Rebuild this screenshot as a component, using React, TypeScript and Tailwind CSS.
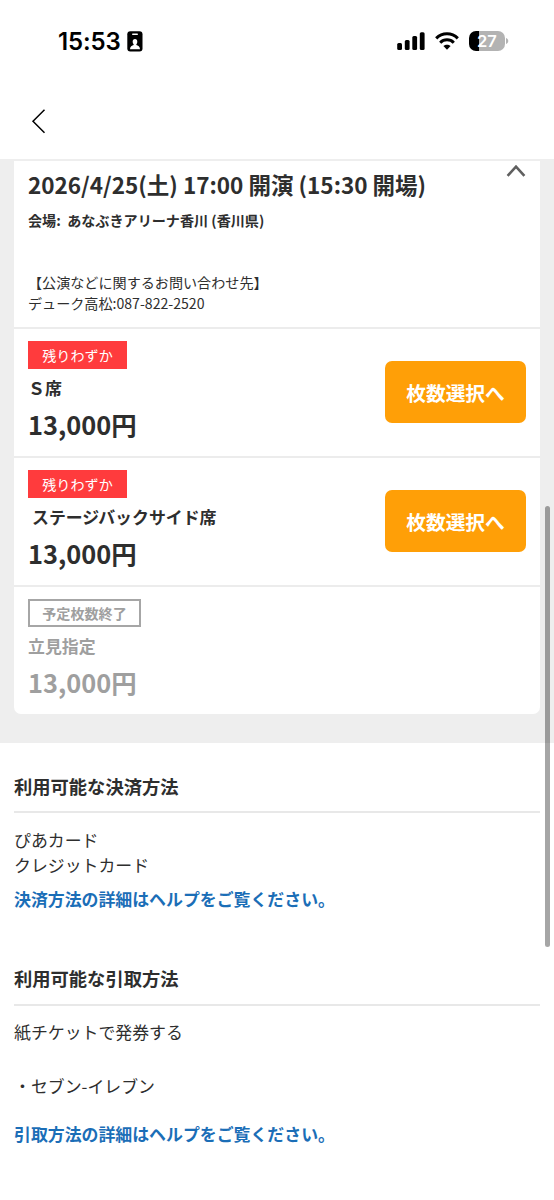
type Seat = { name: string; price: string; indent: string; soldOut?: boolean };

const seats: Seat[] = [
  { name: 'Ｓ席', price: '13,000円', indent: 'pl-0' },
  { name: 'ステージバックサイド席', price: '13,000円', indent: 'pl-[4px]' },
  { name: '立見指定', price: '13,000円', indent: 'pl-0', soldOut: true },
];

function StatusBar() {
  return (
    <div className="flex h-[82px] items-center justify-between pl-[58px] pr-[45px] text-black">
      <div className="flex items-center gap-[6px]">
        <span className="w-[63px] whitespace-nowrap pt-px font-[Inter,sans-serif] text-[24px] font-semibold leading-7 tracking-[-0.1px]">15:53</span>
        <svg width="16" height="21" viewBox="0 0 16 21">
          <rect x="0.3" y="0.3" width="15.2" height="20.2" rx="3" fill="#000" />
          <rect x="5" y="2.5" width="6" height="1.6" rx="0.8" fill="#fff" />
          <ellipse cx="8" cy="10.8" rx="2.3" ry="2.8" fill="#fff" />
          <path d="M3 18.2C3 15.6 5 14.6 6.7 14.1V12.5H9.3V14.1C11 14.6 13 15.6 13 18.2Z" fill="#fff" />
        </svg>
      </div>
      <div className="flex items-center">
        <svg width="28" height="18" viewBox="0 0 28 18">
          <rect x="0.2" y="11" width="4.8" height="7" rx="1.5" />
          <rect x="7.8" y="8" width="4.8" height="10" rx="1.5" />
          <rect x="15.3" y="4" width="4.8" height="14" rx="1.5" />
          <rect x="22.8" y="0.2" width="4.8" height="17.8" rx="1.5" />
        </svg>
        <svg className="ml-[10px]" width="24" height="18" viewBox="0 0 24 18" fill="none" stroke="#000" strokeWidth="3">
          <path d="M1.2 6.4C7.2 0.2 16.8 0.2 22.8 6.4" />
          <path d="M5.2 10.7C9 6.9 15 6.9 18.8 10.7" />
          <path d="M8.4 14.1C10.5 12.2 13.5 12.2 15.6 14.1L12 17.8Z" fill="#000" stroke="none" />
        </svg>
        <div className="ml-[10px] flex h-5 w-9 items-center justify-center overflow-hidden rounded-[7px] bg-[linear-gradient(to_right,#000_10px,#b3b3b3_10px)]">
          <span className="font-[Inter,sans-serif] text-[16.5px] font-semibold leading-5 text-white">27</span>
        </div>
        <svg className="ml-px" width="3" height="6" viewBox="0 0 3 6">
          <path d="M0 0C3 1.2 3 4.8 0 6Z" fill="#b3b3b3" />
        </svg>
      </div>
    </div>
  );
}

function SeatRow({ seat }: { seat: Seat }) {
  return (
    <div className={seat.soldOut ? 'h-[129px] border-t-2 border-[#ececec] px-[14px] pt-3 text-[#9f9f9f]' : 'flex h-[129px] items-start justify-between border-t-2 border-[#ececec] px-[14px] text-[#2e2e2e]'}>
      <div className={seat.soldOut ? '' : 'pt-3'}>
        {seat.soldOut ? (
          <div className="flex h-7 w-[113px] items-center justify-center border-2 border-[#a6a6a6] text-[14.1px] font-bold leading-6">予定枚数終了</div>
        ) : (
          <div className="flex h-7 w-[99px] items-center justify-center bg-[#ff3b3d] text-[14.1px] leading-7 text-white">残りわずか</div>
        )}
        <div className={`mt-[7px] h-6 whitespace-nowrap text-[16.9px] font-bold leading-6 ${seat.indent}`}>{seat.name}</div>
        <div className="mt-[7px] h-[34px] whitespace-nowrap text-[25.4px] font-bold leading-[34px]">{seat.price}</div>
      </div>
      {!seat.soldOut && (
        <button className="mt-8 h-[62px] w-[141px] rounded-[7px] bg-[#ff9f07] pt-px text-[19.7px] font-bold leading-7 text-white">枚数選択へ</button>
      )}
    </div>
  );
}

export default function App() {
  return (
    <div className="relative h-[1200px] w-[554px] overflow-hidden bg-white font-['Noto_Sans_CJK_JP',sans-serif] text-[#2e2e2e]">
      <StatusBar />
      <div className="flex h-[77px] items-center pl-[31px]">
        <svg width="15" height="26" viewBox="0 0 15 26" fill="none" stroke="#000" strokeWidth="1.5">
          <path d="M13.5 1.7L2 13.2L13.5 24.8" />
        </svg>
      </div>
      <div className="h-[584px] bg-[#eeeeee] px-[14px] pt-[2px]">
        <div className="h-[553px] overflow-hidden rounded-b-[7px] bg-white">
          <div className="relative h-[166px] px-[14px] pt-[7px]">
            <h1 className="whitespace-nowrap text-[22.5px] font-bold leading-8">2026/4/25(土) 17:00 開演 (15:30 開場)</h1>
            <p className="mt-[10px] whitespace-pre text-[14.1px] font-bold leading-5">会場:  あなぶきアリーナ香川 (香川県)</p>
            <p className="mt-[42px] whitespace-nowrap text-[14.1px] leading-[21px]">
              【公演などに関するお問い合わせ先】
              <br />
              デューク高松:087-822-2520
            </p>
            <svg className="absolute right-[14px] top-[2px]" width="20" height="15" viewBox="0 0 20 15" fill="none" stroke="#606060" strokeWidth="2.6">
              <path d="M1.6 12.8L10 3.6L18.4 12.8" />
            </svg>
          </div>
          {seats.map((seat) => (
            <SeatRow key={seat.name} seat={seat} />
          ))}
        </div>
      </div>
      <section className="px-[14px] pt-[29px]">
        <h2 className="h-[41px] border-b-2 border-[#e8e8e8] text-[18.3px] font-bold leading-[28px]">利用可能な決済方法</h2>
        <p className="mt-[14px] text-[16.9px] leading-[25px]">
          ぴあカード
          <br />
          クレジットカード
        </p>
        <a className="mt-[9px] block text-[16.9px] font-bold leading-[26px] text-[#1b6eb7]">決済方法の詳細はヘルプをご覧ください。</a>
      </section>
      <section className="px-[14px] pt-[52px]">
        <h2 className="h-[42px] border-b-2 border-[#e8e8e8] text-[18.3px] font-bold leading-[28px]">利用可能な引取方法</h2>
        <p className="mt-[13px] text-[16.9px] leading-[25px]">紙チケットで発券する</p>
        <p className="mt-[29px] text-[16.9px] leading-[25px]">・セブン-イレブン</p>
        <a className="mt-[23px] block text-[16.9px] font-bold leading-[26px] text-[#1b6eb7]">引取方法の詳細はヘルプをご覧ください。</a>
      </section>
      <div className="absolute left-[545px] top-[506px] h-[441px] w-[5px] rounded-full bg-black/35" />
    </div>
  );
}
